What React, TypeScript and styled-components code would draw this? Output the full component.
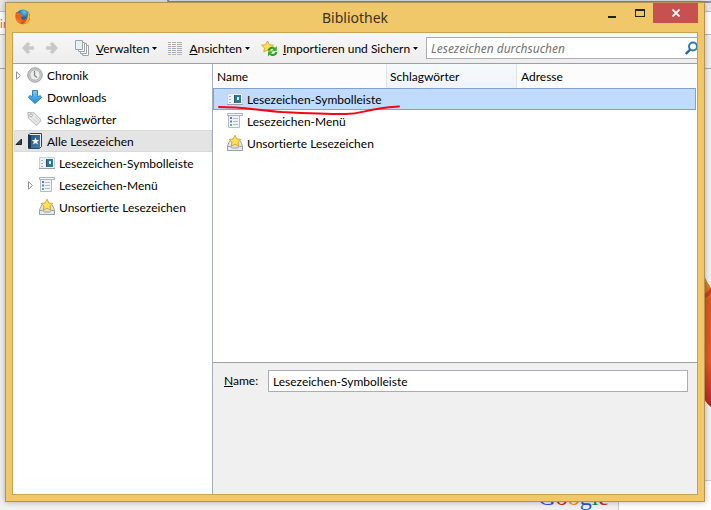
import React from 'react';
import styled, { createGlobalStyle, css } from 'styled-components';

const GlobalStyle = createGlobalStyle`
  * { box-sizing: border-box; }
  body { margin: 0; background: #f1f1f1; }
  body, button, input, table { font-family: Lato, "Noto Sans", sans-serif; font-size: 12px; font-variant-ligatures: none; color: #000; }
  button { border: 0; padding: 0; background: none; }
  ul { list-style: none; margin: 0; padding: 0; }
  svg { display: block; flex: none; }
`;

const Desktop = styled.div`
  position: relative;
  display: flex;
  min-height: 100vh;
  padding: 2px 6px 8px 5px;
  overflow: hidden;
`;

const Backdrop = styled.div`
  position: absolute;
  inset: 0;
  display: flex;
  flex-direction: column;
  background: #f1f1f1;
`;
const BackTabs = styled.div`
  height: 12px;
  background: #e9e9ea;
  border-bottom: 1px solid #b9bcc2;
`;
const BackTab = styled.div`
  height: 3px;
  margin-left: 167px;
  border: 2px solid #8c9097;
  border-width: 0 0 2px 2px;
  border-radius: 0 0 0 6px;
  background: #e3e5e8;
`;
const BackAddress = styled.div`
  height: 23px;
  background: #fff;
  border-bottom: 1px solid #b5b9bf;
  color: #e8701a;
  line-height: 23px;
`;
const BackToolbar = styled.div`
  height: 34px;
  background: #f0f0f0;
  border-bottom: 1px solid #a5a9ad;
`;
const BackPage = styled.div`
  display: flex;
  flex: 1;
  align-items: flex-end;
`;
const BackLogoArea = styled.div`
  display: flex;
  flex: 1;
  justify-content: flex-end;
  height: 30px;
  padding-right: 9px;
  overflow: hidden;
  border-right: 1px solid #c9ccd0;
  background: #f1f1f1;
`;
const GoogleWord = styled.div`
  padding-top: 2px;
  font: 24px/30px "Liberation Serif", serif;
`;
const Letter = styled.span<{ $color: string }>`
  color: ${p => p.$color};
`;
const BackPanel = styled.div`
  width: 92px;
  height: 30px;
  border-top: 1px solid #c9ccd0;
  background: #fff;
`;
const FoxArt = styled.svg`
  position: absolute;
  right: 0;
  top: 275px;
`;

const Window = styled.section`
  position: relative;
  display: flex;
  flex: 1;
  flex-direction: column;
  min-width: 0;
  padding: 0 6px 6px;
  background: #f0c869;
  border: 1px solid #b4954f;
  box-shadow: 0 0 6px rgba(0, 0, 0, 0.3);
`;

const TitleBar = styled.header`
  display: grid;
  grid-template-columns: 1fr auto 1fr;
  height: 29px;
`;
const AppIcon = styled.div`
  padding: 6px 0 0 3px;
`;
const Title = styled.h1`
  margin: 0;
  color: #3a3320;
  font-family: "Noto Sans", sans-serif;
  font-size: 14px;
  font-weight: 400;
  line-height: 29px;
`;
const WindowControls = styled.div`
  display: flex;
  justify-content: flex-end;
`;
const ControlButton = styled.button<{ $close?: boolean }>`
  display: flex;
  align-items: center;
  justify-content: center;
  width: ${p => (p.$close ? 45 : 27)}px;
  height: 20px;
  background: ${p => (p.$close ? '#c75050' : 'transparent')};
`;

const Client = styled.div`
  display: flex;
  flex: 1;
  flex-direction: column;
  min-height: 0;
  border: 1px solid #c9a253;
  background: #fff;
  overflow: hidden;
`;

const Toolbar = styled.div`
  display: flex;
  align-items: center;
  height: 31px;
  padding-left: 7px;
  border-bottom: 1px solid #a0a0a0;
  background: linear-gradient(#f7f7f7, #ededed);
`;
const NavButton = styled.button`
  display: flex;
  align-items: center;
  width: 24px;
  height: 24px;
  padding-left: 1px;
`;
const MenuButton = styled.button`
  display: flex;
  align-items: center;
  gap: 5px;
  height: 24px;
  margin-left: 5px;
  padding: 0 4px 0 2px;
  white-space: nowrap;
`;
const MenuLabel = styled.span`
  display: flex;
  align-items: center;
  gap: 3px;
`;
const Search = styled.label`
  display: flex;
  flex: 1;
  align-items: center;
  min-width: 0;
  height: 22px;
  margin-left: 4px;
  border: 1px solid #a9abb2;
  border-right: 0;
  background: #fff;
`;
const SearchInput = styled.input`
  flex: 1;
  min-width: 0;
  height: 20px;
  padding: 0 4px;
  border: 0;
  background: none;
  outline: 0;
  &::placeholder { color: #757575; font-family: "Noto Sans", sans-serif; font-style: italic; opacity: 1; }
`;

const Body = styled.div`
  display: flex;
  flex: 1;
  min-height: 0;
`;
const Sidebar = styled.nav`
  width: 200px;
  padding-left: 1px;
  border-right: 1px solid #a5aeb9;
  background: #fff;
`;
const TreeRow = styled.div<{ $level?: number; $selected?: boolean }>`
  display: flex;
  align-items: center;
  height: 22px;
  padding-left: ${p => (p.$level ? 13 : 1)}px;
  white-space: nowrap;
  ${p => p.$selected && css`
    background: #e4e4e4;
    box-shadow: inset 0 0 0 1px #d9d9d9;
  `}
`;
const Twisty = styled.span`
  width: 12px;
  flex: none;
`;
const IconLabel = styled.span`
  display: flex;
  align-items: center;
  gap: 4px;
`;

const Content = styled.main`
  position: relative;
  display: flex;
  flex: 1;
  flex-direction: column;
  min-width: 0;
`;
const ListArea = styled.div`
  flex: 1;
  padding-right: 1px;
`;
const Table = styled.table`
  width: 100%;
  table-layout: fixed;
  border-collapse: separate;
  border-spacing: 0;
`;
const HeadCell = styled.th<{ $width?: number; $tinted?: boolean }>`
  width: ${p => (p.$width ? `${p.$width}px` : 'auto')};
  height: 24px;
  padding: 0 0 0 ${p => (p.$tinted ? 3 : 4)}px;
  border-right: ${p => (p.$width ? '1px solid #dfe5ee' : '0')};
  background: ${p => (p.$tinted ? 'linear-gradient(#f5fafd, #f0f4fa)' : '#fcfcfc')};
  font-weight: 400;
  text-align: left;
`;
const Cell = styled.td<{ $selected?: boolean }>`
  height: 22px;
  padding: 0 0 0 14px;
  white-space: nowrap;
  ${p => p.$selected && css`
    border: 1px solid #7da2ce;
    border-width: 1px 0;
    background: #c1dbfc;
    &:first-child { border-left-width: 1px; padding-left: 13px; }
    &:last-child { border-right-width: 1px; }
  `}
`;
const PenStroke = styled.svg`
  position: absolute;
  left: 4px;
  top: 38px;
  pointer-events: none;
`;

const Details = styled.form`
  display: flex;
  align-items: flex-start;
  min-height: 132px;
  padding: 7px 9px 8px 11px;
  border-top: 1px solid #a0a0a0;
  background: #f0f0f0;
`;
const DetailsLabel = styled.label`
  width: 44px;
  line-height: 22px;
`;
const NameInput = styled.input`
  flex: 1;
  min-width: 0;
  height: 22px;
  padding: 0 4px;
  border: 1px solid #abadb3;
  background: #fff;
`;

const FirefoxIcon = () => (
  <svg width="16" height="16" viewBox="0 0 16 16">
    <defs>
      <radialGradient id="globe" cx=".6" cy=".2" r=".8">
        <stop offset="0" stopColor="#5ec9ee" /><stop offset=".5" stopColor="#1c6cb5" /><stop offset="1" stopColor="#142d66" />
      </radialGradient>
      <linearGradient id="fox" x1="0" y1="0" x2="1" y2="1">
        <stop offset="0" stopColor="#e2561b" /><stop offset=".5" stopColor="#ee6a1b" /><stop offset="1" stopColor="#b92a1b" />
      </linearGradient>
    </defs>
    <circle cx="8" cy="7.2" r="6.8" fill="url(#globe)" />
    <path d="M1.2 3Q2.5 3 3.2 4Q4.6 3.4 5.9 4Q5.4 5.2 6.4 5.8L8.2 6.3Q8 7.4 6.4 7.8L6.2 9.2Q7.6 11.2 9.8 10.2Q12 9.4 12.2 7.4Q13 5.6 12.8 2.6Q15.2 5 15 8.4A7.3 7.3 0 0 1 .6 9.6Q-.2 6 1.2 3Z" fill="url(#fox)" />
    <path d="M13.2 3.4Q16.2 8 13.4 12Q11.2 14.8 7.8 15Q13 12.4 13.2 3.4Z" fill="#f9b52c" />
    <path d="M1.8 6L3.6 5.2M1.8 9.4Q2.8 12.7 6 13.2" fill="none" stroke="#f28f37" strokeWidth=".9" />
  </svg>
);
const Arrow = ({ forward = false }) => (
  <svg width="14" height="14" viewBox="0 0 14 14">
    <path transform={forward ? 'translate(14 0) scale(-1 1)' : undefined} d="M1 7L6.5 1L9.3 2.8L7.4 5.3H13V8.7H7.4L9.3 11.2L6.500 13Z" fill="#c6c8ca" />
  </svg>
);
const PagesIcon = () => (
  <svg width="16" height="16" viewBox="0 0 16 16" fill="#fafcfd" stroke="#9ea3a8">
    <path d="M6.5 5.5h7v10h-6v-2" /><path d="M4.500 3.500h7v10h-6v-2" /><path d="M2.500 2.500h7v9h-6v-2" /><path d="M.5.5h7v9h-7z" fill="#e6f0f8" />
  </svg>
);
const ViewIcon = () => (
  <svg width="16" height="16" viewBox="0 0 16 16">
    {['#a9b77c', '#b5a0d8', '#e29090', '#9db4dc', '#a9b77c', '#b5a0d8'].map((color, i) => (
      <g key={i} transform={`translate(0 ${i * 2 + 2})`}>
        <path d="M0 .5h3" stroke={color} /><path d="M4 .5h4m1 0h5" stroke="#a9adb2" />
      </g>
    ))}
    <path d="M0 14.5h3m1 0h4m1 0h5" stroke="#b5b9bd" />
  </svg>
);
const Star = () => <path d="M6.5 1L8.3 4.7L12.4 5.2L9.5 8L10.2 12L6.5 10L2.8 12L3.5 8L.6 5.2L4.7 4.7Z" fill="#ffe15a" stroke="#d0a02a" strokeWidth=".9" />;
const ImportIcon = () => (
  <svg width="17" height="17" viewBox="0 0 17 17">
    <Star />
    <g fill="none" stroke="#2f9c27" strokeWidth="2">
      <path d="M7.5 10.5Q8.5 7.3 12 7.7L14 9" /><path d="M15.5 12Q14.5 15.4 11 15L9 13.8" />
    </g>
    <path d="M15.8 6v5h-5zM7 16.5v-5h5z" fill="#3dae30" />
  </svg>
);
const Caret = () => <svg width="5" height="3" viewBox="0 0 5 3"><path d="M0 0h5L2.5 3z" /></svg>;
const SearchIcon = () => (
  <svg width="12" height="15" viewBox="0 0 12 15">
    <circle cx="8" cy="5.5" r="4" fill="#f5fbff" stroke="#3779af" strokeWidth="2" />
    <path d="M5.2 8.600L.8 13" stroke="#2d66a3" strokeWidth="2.4" />
  </svg>
);
const ClockIcon = () => (
  <svg width="16" height="16" viewBox="0 0 16 16">
    <circle cx="8" cy="8" r="7.3" fill="#c4c6c7" stroke="#a3a6a8" />
    <circle cx="8" cy="8" r="5.2" fill="#eceded" stroke="#b3b5b6" />
    <path d="M7.5 4v4.500L10 10.500" fill="none" stroke="#85888b" strokeWidth="1.3" />
  </svg>
);
const DownloadIcon = () => (
  <svg width="16" height="16" viewBox="0 0 16 16">
    <defs><linearGradient id="download" x2="0" y2="1"><stop stopColor="#81cdf7" /><stop offset="1" stopColor="#1e86d6" /></linearGradient></defs>
    <path d="M5.500 1.500h5v6l3-.8L14.500 8.500L8 14.500L1.500 8.500L2.500 6.700L5.500 7.500Z" fill="url(#download)" stroke="#3681bd" />
  </svg>
);
const TagIcon = () => (
  <svg width="16" height="16" viewBox="0 0 16 16">
    <path d="M.8 1.500L7 1.800L13.800 8.500Q14.300 9.200 13.800 9.800L10 13.800Q9.300 14.300 8.700 13.800L1.500 7.200Z" fill="#e8e9e9" stroke="#b3b5b7" />
    <circle cx="4" cy="4.400" r="1.400" fill="#fff" stroke="#a5a7a9" /><path d="M6 7.500l4 4m-2-6l4 4" stroke="#c9cbcc" />
  </svg>
);
const BookIcon = () => (
  <svg width="16" height="16" viewBox="0 0 16 16">
    <defs><linearGradient id="book" x2="1" y2="1"><stop stopColor="#29537c" /><stop offset="1" stopColor="#4281aa" /></linearGradient></defs>
    <path d="M1.500 1.500l2-1h11v13l-2 2h-11z" fill="#e7eef4" stroke="#24496b" />
    <path d="M1 2h12v13H1z" fill="url(#book)" /><path d="M1 2h3v13H1z" fill="#1d3248" />
    <path d="M8.500 4.500l1 2.600h2.800l-2.200 1.700.8 2.700-2.400-1.600-2.400 1.600.8-2.700-2.200-1.700h2.800z" fill="#fff" />
  </svg>
);
const BarIcon = () => (
  <svg width="16" height="16" viewBox="0 0 16 16">
    <path d="M.5 2.500h15v11H.5z" fill="#eef1f4" stroke="#cbd1d7" /><path d="M0 13.500h16" stroke="#9ba4ac" />
    <path d="M2 5.500h2m-2 3h2m-2 3h2" stroke="#a8b2bc" /><path d="M7 4h7v8H7z" fill="#32788c" />
    <path d="M7.500 4v8" stroke="#1f566c" /><path d="M10 6h2v3h-2z" fill="#cdeaea" />
  </svg>
);
const MenuIcon = () => (
  <svg width="16" height="16" viewBox="0 0 16 16">
    <path d="M1.500 2.500h11v12h-11z" fill="#eef3f8" stroke="#b4bdc6" /><path d="M.5.500h15v2H.5z" fill="#f7f8f9" stroke="#aab3bd" />
    <path d="M3 5h2" stroke="#7a68b8" strokeWidth="2" /><path d="M3 8.500h2" stroke="#4a88c4" strokeWidth="2" /><path d="M3 12h2" stroke="#68ad78" strokeWidth="2" />
    <path d="M6 5.500h5M6 8.500h5m-5 3h5" stroke="#b2bcc7" />
  </svg>
);
const UnsortedIcon = () => (
  <svg width="16" height="16" viewBox="0 0 16 16">
    <path d="M3 5.500h10l2.500 5v5H.5v-5z" fill="#dce1e6" stroke="#a2a9b0" />
    <g transform="translate(1.500 -.8)"><Star /></g>
    <path d="M.5 11.500h3l2 1.500h5l2-1.500h3v4H.5z" fill="#e6eaed" stroke="#9aa3ab" />
  </svg>
);
const TwistyIcon = ({ open = false }) => (
  <svg width="7" height="9" viewBox="0 0 7 9">
    {open ? <path d="M6.500 2v5.500H1z" fill="#404040" stroke="#222" /> : <path d="M1.500.8L5.500 4.500L1.500 8.200Z" fill="#fff" stroke="#919191" />}
  </svg>
);

const tree = [
  { label: 'Chronik', Icon: ClockIcon, twisty: 'closed' },
  { label: 'Downloads', Icon: DownloadIcon },
  { label: 'Schlagwörter', Icon: TagIcon },
  { label: 'Alle Lesezeichen', Icon: BookIcon, twisty: 'open', selected: true },
  { label: 'Lesezeichen-Symbolleiste', Icon: BarIcon, level: 1 },
  { label: 'Lesezeichen-Menü', Icon: MenuIcon, twisty: 'closed', level: 1 },
  { label: 'Unsortierte Lesezeichen', Icon: UnsortedIcon, level: 1 },
];
const folders = tree.slice(4);
const menus = [
  { key: 'V', rest: 'erwalten', Icon: PagesIcon },
  { key: 'A', rest: 'nsichten', Icon: ViewIcon },
  { key: 'I', rest: 'mportieren und Sichern', Icon: ImportIcon },
];
const googleLetters = [['G', '#2456dc'], ['o', '#d02a25'], ['o', '#e99a19'], ['g', '#2456dc'], ['l', '#188c3a'], ['e', '#d02a25']];

export default function App() {
  return (
    <Desktop>
      <GlobalStyle />
      <Backdrop aria-hidden="true">
        <BackTabs><BackTab /></BackTabs>
        <BackAddress>ir</BackAddress>
        <BackToolbar />
        <BackPage>
          <BackLogoArea>
            <GoogleWord>{googleLetters.map(([letter, color], i) => <Letter key={i} $color={color}>{letter}</Letter>)}</GoogleWord>
          </BackLogoArea>
          <BackPanel />
        </BackPage>
        <FoxArt width="7" height="134" viewBox="0 0 7 134">
          <defs><linearGradient id="tail" x2="0" y2="1"><stop stopColor="#ee8a22" /><stop offset=".2" stopColor="#d95a20" /><stop offset=".65" stopColor="#e65a25" /><stop offset="1" stopColor="#b92028" /></linearGradient></defs>
          <path d="M0 0Q3 8 7 13V132Q3 129 0 124Z" fill="url(#tail)" /><path d="M0 24L7 19V13L0 20Z" fill="#c74422" />
        </FoxArt>
      </Backdrop>
      <Window>
        <TitleBar>
          <AppIcon><FirefoxIcon /></AppIcon>
          <Title>Bibliothek</Title>
          <WindowControls>
            <ControlButton aria-label="Minimieren"><svg width="9" height="13" viewBox="0 0 9 13"><path d="M0 9h8v2H0z" fill="#222" /></svg></ControlButton>
            <ControlButton aria-label="Maximieren"><svg width="10" height="8" viewBox="0 0 10 8"><path d="M0 0h10v8H0zM1 2v5h8V2z" fill="#222" fillRule="evenodd" /></svg></ControlButton>
            <ControlButton $close aria-label="Schließen"><svg width="8" height="8" viewBox="0 0 8 8"><path d="M.5.5l7 7m0-7l-7 7" stroke="#fff" strokeWidth="1.8" /></svg></ControlButton>
          </WindowControls>
        </TitleBar>
        <Client>
          <Toolbar>
            <NavButton aria-label="Zurück"><Arrow /></NavButton>
            <NavButton aria-label="Vor"><Arrow forward /></NavButton>
            {menus.map(({ key, rest, Icon }) => (
              <MenuButton key={key}><Icon /><MenuLabel><span><u>{key}</u>{rest}</span><Caret /></MenuLabel></MenuButton>
            ))}
            <Search>
              <SearchInput type="text" aria-label="Lesezeichen durchsuchen" placeholder="Lesezeichen durchsuchen" />
              <SearchIcon />
            </Search>
          </Toolbar>
          <Body>
            <Sidebar aria-label="Bibliothek">
              <ul>
                {tree.map(({ label, Icon, twisty, level, selected }) => (
                  <li key={label}>
                    <TreeRow $level={level} $selected={selected}>
                      <Twisty>{twisty && <TwistyIcon open={twisty === 'open'} />}</Twisty>
                      <IconLabel><Icon />{label}</IconLabel>
                    </TreeRow>
                  </li>
                ))}
              </ul>
            </Sidebar>
            <Content>
              <ListArea>
                <Table>
                  <thead>
                    <tr><HeadCell $width={174}>Name</HeadCell><HeadCell $width={130} $tinted>Schlagwörter</HeadCell><HeadCell>Adresse</HeadCell></tr>
                  </thead>
                  <tbody>
                    {folders.map(({ label, Icon }, i) => (
                      <tr key={label}>
                        <Cell $selected={i === 0}><IconLabel><Icon />{label}</IconLabel></Cell>
                        <Cell $selected={i === 0} /><Cell $selected={i === 0} />
                      </tr>
                    ))}
                  </tbody>
                </Table>
              </ListArea>
              <PenStroke width="184" height="16" viewBox="0 0 184 16" fill="none">
                <path d="M2 5C25 5 40 8 65 10C85 11 105 12 129 12C148 12 144 7 182 4.500" stroke="#f40612" strokeWidth="2" strokeLinecap="round" />
              </PenStroke>
              <Details>
                <DetailsLabel htmlFor="bookmark-name"><u>N</u>ame:</DetailsLabel>
                <NameInput id="bookmark-name" defaultValue="Lesezeichen-Symbolleiste" />
              </Details>
            </Content>
          </Body>
        </Client>
      </Window>
    </Desktop>
  );
}
